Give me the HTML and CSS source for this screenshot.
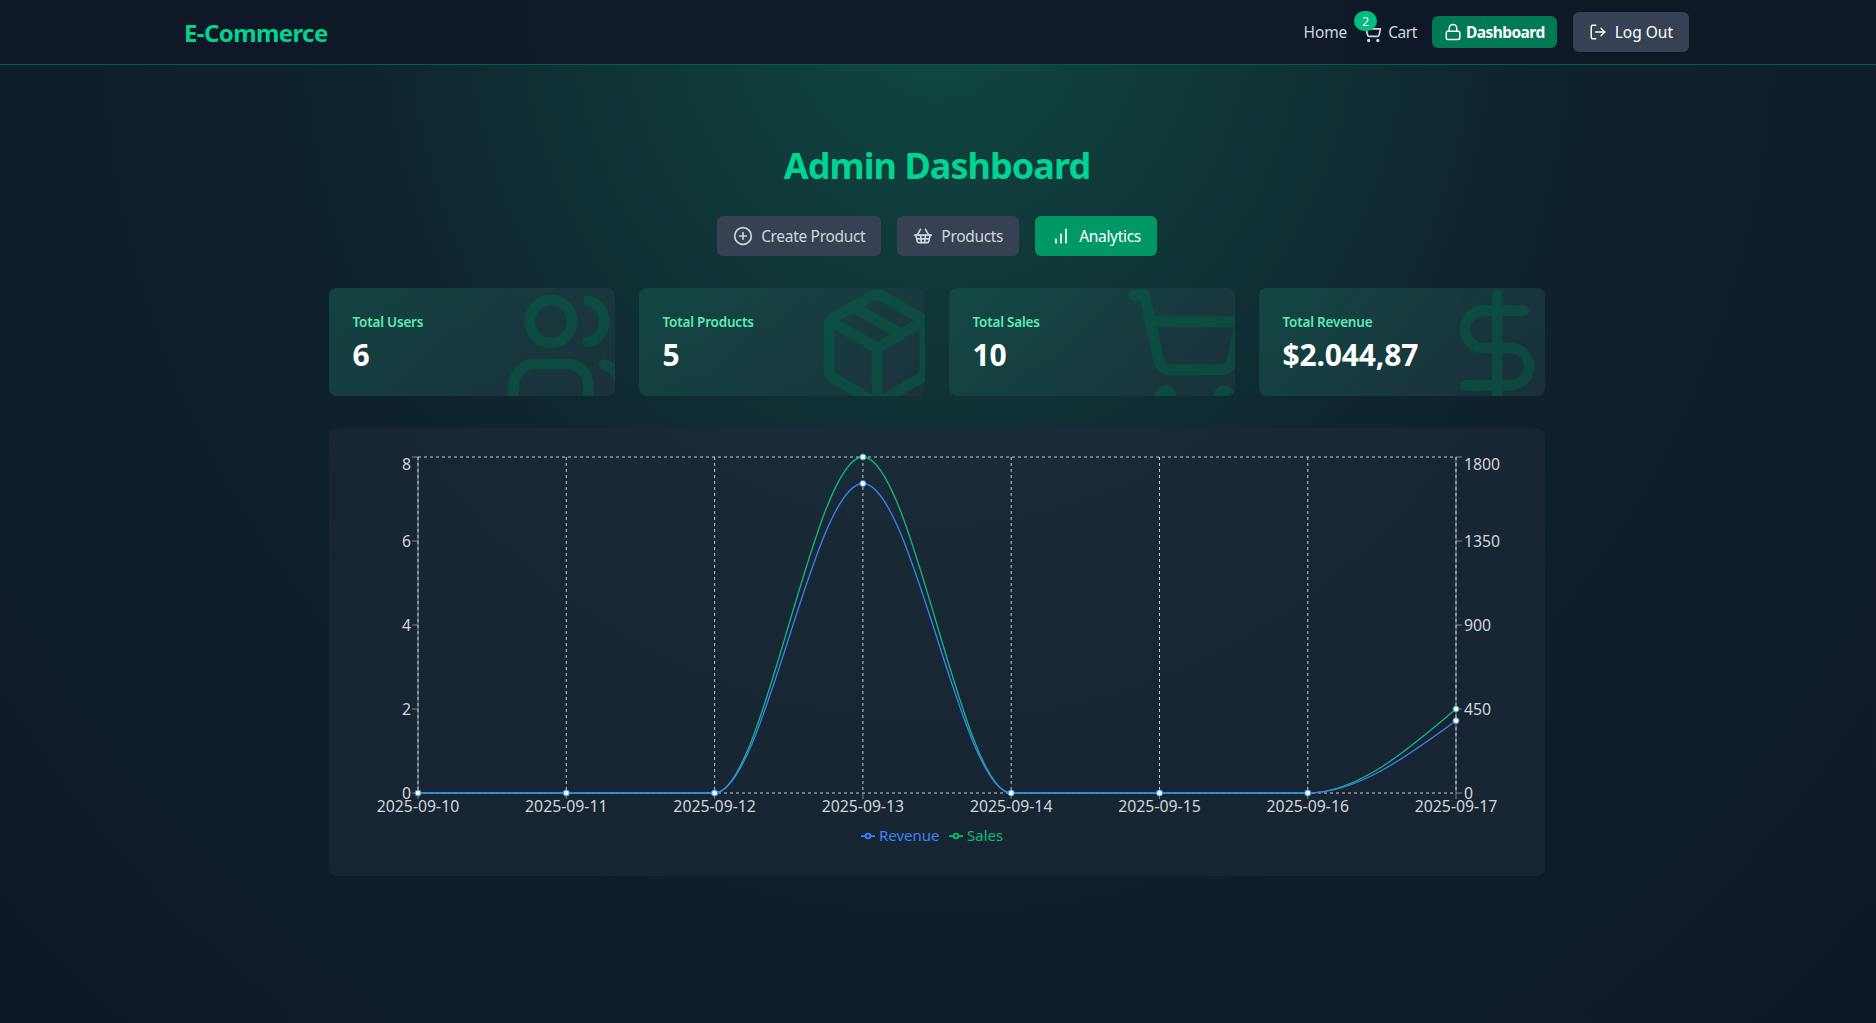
FILE: index.html
```html
<!DOCTYPE html>
<html lang="en">
<head>
<meta charset="utf-8">
<title>E-Commerce Admin Dashboard</title>
<link rel="stylesheet" href="styles.css">
</head>
<body>
<header class="header">
  <div class="header-inner">
    <a class="logo">E-Commerce</a>
    <nav class="nav">
      <a class="nav-link">Home</a>
      <a class="nav-link cart">
        <span class="badge">2</span>
        <svg class="icon i20 cart-icon" viewBox="0 0 24 24"><circle cx="8" cy="21" r="1"/><circle cx="19" cy="21" r="1"/><path d="M2.05 2.05h2l2.66 12.42a2 2 0 0 0 2 1.58h9.78a2 2 0 0 0 1.95-1.57l1.65-7.43H5.12"/></svg>
        <span class="cart-text">Cart</span>
      </a>
      <a class="btn-dash">
        <svg class="icon i18" viewBox="0 0 24 24"><rect x="3" y="11" width="18" height="11" rx="2"/><path d="M7 11V7a5 5 0 0 1 10 0v4"/></svg>
        <span>Dashboard</span>
      </a>
      <a class="btn-logout">
        <svg class="icon i18" viewBox="0 0 24 24"><path d="M9 21H5a2 2 0 0 1-2-2V5a2 2 0 0 1 2-2h4"/><path d="M16 17l5-5-5-5"/><path d="M21 12H9"/></svg>
        <span>Log Out</span>
      </a>
    </nav>
  </div>
</header>
<main class="main">
  <h1 class="title">Admin Dashboard</h1>
  <div class="tabs">
    <button class="tab">
      <svg class="icon i20" viewBox="0 0 24 24"><circle cx="12" cy="12" r="10"/><path d="M8 12h8"/><path d="M12 8v8"/></svg>
      Create Product
    </button>
    <button class="tab">
      <svg class="icon i20" viewBox="0 0 24 24"><path d="m15 11-1 9"/><path d="m19 11-4-7"/><path d="M2 11h20"/><path d="m3.5 11 1.6 7.4a2 2 0 0 0 2 1.6h9.8a2 2 0 0 0 2-1.6l1.7-7.4"/><path d="M4.5 15.5h15"/><path d="m5 11 4-7"/><path d="m9 11 1 9"/></svg>
      Products
    </button>
    <button class="tab tab-active">
      <svg class="icon i20" viewBox="0 0 24 24"><path d="M12 20V10"/><path d="M18 20V4"/><path d="M6 20v-4"/></svg>
      Analytics
    </button>
  </div>
  <section class="cards">
    <article class="card">
      <div class="card-text"><p class="card-label">Total Users</p><p class="card-value">6</p></div>
      <svg class="icon card-icon" viewBox="0 0 24 24"><path d="M16 21v-2a4 4 0 0 0-4-4H6a4 4 0 0 0-4 4v2"/><circle cx="9" cy="7" r="4"/><path d="M22 21v-2a4 4 0 0 0-3-3.87"/><path d="M16 3.13a4 4 0 0 1 0 7.75"/></svg>
    </article>
    <article class="card">
      <div class="card-text"><p class="card-label">Total Products</p><p class="card-value">5</p></div>
      <svg class="icon card-icon" viewBox="0 0 24 24"><path d="m7.5 4.27 9 5.15"/><path d="M21 8a2 2 0 0 0-1-1.73l-7-4a2 2 0 0 0-2 0l-7 4A2 2 0 0 0 3 8v8a2 2 0 0 0 1 1.73l7 4a2 2 0 0 0 2 0l7-4A2 2 0 0 0 21 16Z"/><path d="m3.3 7 8.7 5 8.7-5"/><path d="M12 22V12"/></svg>
    </article>
    <article class="card">
      <div class="card-text"><p class="card-label">Total Sales</p><p class="card-value">10</p></div>
      <svg class="icon card-icon" viewBox="0 0 24 24"><circle cx="8" cy="21" r="1"/><circle cx="19" cy="21" r="1"/><path d="M2.05 2.05h2l2.66 12.42a2 2 0 0 0 2 1.58h9.78a2 2 0 0 0 1.95-1.57l1.65-7.43H5.12"/></svg>
    </article>
    <article class="card">
      <div class="card-text"><p class="card-label">Total Revenue</p><p class="card-value">$2.044,87</p></div>
      <svg class="icon card-icon" viewBox="0 0 24 24"><path d="M12 2v20"/><path d="M17 5H9.5a3.5 3.5 0 0 0 0 7h5a3.5 3.5 0 0 1 0 7H6"/></svg>
    </article>
  </section>
  <section class="chart-panel">
    <svg class="chart" viewBox="353 452 1168 400" width="1168" height="400">
      <g class="grid">
        <path d="M418 457H1456M418 793H1456"/>
        <path d="M418 457V793M566.3 457V793M714.6 457V793M862.9 457V793M1011.2 457V793M1159.5 457V793M1307.8 457V793M1456 457V793"/>
      </g>
      <g class="axis">
        <path d="M418 457V793M412 457H418M412 541H418M412 625H418M412 709H418M412 793H418"/>
        <path d="M1456 457V793M1456 457H1462M1456 541H1462M1456 625H1462M1456 709H1462M1456 793H1462"/>
        <path d="M418 793V799M566.3 793V799M714.6 793V799M862.9 793V799M1011.2 793V799M1159.5 793V799M1307.8 793V799M1456 793V799"/>
      </g>
      <g class="tick-text tick-end">
        <text x="411" y="470">8</text><text x="411" y="547">6</text><text x="411" y="631">4</text><text x="411" y="715">2</text><text x="411" y="799">0</text>
      </g>
      <g class="tick-text tick-start">
        <text x="1464" y="470">1800</text><text x="1464" y="547">1350</text><text x="1464" y="631">900</text><text x="1464" y="715">450</text><text x="1464" y="799">0</text>
      </g>
      <g class="tick-text tick-mid">
        <text x="418" y="812">2025-09-10</text><text x="566.3" y="812">2025-09-11</text><text x="714.6" y="812">2025-09-12</text><text x="862.9" y="812">2025-09-13</text><text x="1011.2" y="812">2025-09-14</text><text x="1159.5" y="812">2025-09-15</text><text x="1307.8" y="812">2025-09-16</text><text x="1456" y="812">2025-09-17</text>
      </g>
      <path class="line line-sales" d="M418 793L714.6 793C763.9 793 813.6 457 862.9 457C912.2 457 961.9 793 1011.2 793L1307.8 793C1357.2 793 1406.6 751 1456 709"/>
      <g class="dots dots-sales">
        <circle cx="418" cy="793" r="3"/><circle cx="566.3" cy="793" r="3"/><circle cx="714.6" cy="793" r="3"/><circle cx="862.9" cy="457" r="3"/><circle cx="1011.2" cy="793" r="3"/><circle cx="1159.5" cy="793" r="3"/><circle cx="1307.8" cy="793" r="3"/><circle cx="1456" cy="709" r="3"/>
      </g>
      <path class="line line-revenue" d="M418 793L714.6 793C763.9 793 813.6 483.5 862.9 483.5C912.2 483.5 961.9 793 1011.2 793L1307.8 793C1357.2 793 1406.6 756.8 1456 720.7"/>
      <g class="dots dots-revenue">
        <circle cx="418" cy="793" r="3"/><circle cx="566.3" cy="793" r="3"/><circle cx="714.6" cy="793" r="3"/><circle cx="862.9" cy="483.5" r="3"/><circle cx="1011.2" cy="793" r="3"/><circle cx="1159.5" cy="793" r="3"/><circle cx="1307.8" cy="793" r="3"/><circle cx="1456" cy="720.7" r="3"/>
      </g>
      <g class="legend legend-revenue">
        <path d="M861 836h4.67M870.33 836H875"/><circle cx="868" cy="836" r="2.33"/>
        <text x="879" y="841">Revenue</text>
      </g>
      <g class="legend legend-sales">
        <path d="M949 836h4.67M958.33 836H963"/><circle cx="956" cy="836" r="2.33"/>
        <text x="967" y="841">Sales</text>
      </g>
    </svg>
  </section>
</main>
</body>
</html>
```
FILE: styles.css
```css
* { box-sizing: border-box; }
html, body { margin: 0; padding: 0; height: 100%; }
body {
  min-height: 1023px;
  overflow: hidden;
  background-color: #101828;
  background-image: radial-gradient(ellipse at top, rgba(16,185,129,.3) 0%, rgba(10,80,60,.2) 45%, rgba(0,20,20,.15) 100%);
  color: #fff;
  font-family: "Noto Sans", "Open Sans", sans-serif;
}
p, h1 { margin: 0; }
.icon { fill: none; stroke: currentColor; stroke-width: 2; stroke-linecap: round; stroke-linejoin: round; flex: none; display: block; }
.i20 { width: 20px; height: 20px; }
.i18 { width: 18px; height: 18px; }

.header { height: 65px; width: 100%; background: rgba(16,24,40,.96); border-bottom: 1px solid #006045; }
.header-inner { width: 1536px; margin-left: 169px; padding: 0 16px 0 15px; height: 64px; display: flex; align-items: center; justify-content: space-between; }
.logo { font-size: 24px; font-weight: 700; color: #00d492; letter-spacing: -.6px; }
.nav { display: flex; align-items: center; gap: 16px; }
.nav-link { font-size: 15.5px; color: #d1d5dc; display: flex; align-items: center; gap: 6px; position: relative; letter-spacing: -.1px; }
.cart { margin-left: -1px; margin-right: -1px; }
.cart-text { letter-spacing: -.45px; }
.cart-icon { margin-top: 2px; }
.badge { position: absolute; left: -8px; top: -10px; width: 23px; height: 20px; border-radius: 10px; background: #00bc7d; color: #fff; font-size: 12px; display: flex; align-items: center; justify-content: center; }
.btn-dash { height: 32px; padding: 0 12px; border-radius: 6px; background: #007a55; color: #fff; font-size: 15.5px; font-weight: 700; letter-spacing: -.55px; display: flex; align-items: center; gap: 4px; }
.btn-logout { height: 40px; padding: 0 16px; border-radius: 6px; background: #364153; color: #fff; font-size: 15.5px; display: flex; align-items: center; gap: 8px; }

.main { width: 1874px; padding-top: 81px; }
.title { font-size: 36px; line-height: 40px; font-weight: 700; color: #00d492; text-align: center; margin-bottom: 30px; letter-spacing: -.95px; }
.tabs { display: flex; justify-content: center; gap: 16px; margin-bottom: 32px; }
.tab { height: 40px; padding: 0 16px; border: 0; border-radius: 6px; background: #364153; color: #d1d5dc; font: inherit; font-size: 15.5px; letter-spacing: -.32px; display: flex; align-items: center; gap: 8px; }
.tab-active { background: #009966; color: #fff; }

.cards { width: 1216px; margin: 0 auto 32px; display: grid; grid-template-columns: repeat(4, 1fr); gap: 24px; }
.card { position: relative; height: 108px; padding: 24px 23.5px; overflow: hidden; border-radius: 8px; background: linear-gradient(135deg, rgba(0,153,102,.25), rgba(40,100,90,.15)), rgba(30,41,57,.7); }
.card-label { font-size: 13.5px; line-height: 20px; font-weight: 600; color: #5ee9b5; letter-spacing: -.2px; }
.card-value { font-size: 30px; line-height: 36px; font-weight: 700; color: #fff; letter-spacing: -.15px; margin-top: 5px; }
.card-icon { position: absolute; right: -16px; bottom: -16px; width: 128px; height: 128px; color: #006045; opacity: .5; }

.chart-panel { width: 1216px; height: 448px; margin: 0 auto; padding: 24px; border-radius: 8px; background: rgba(30,41,57,.6); }
.chart { display: block; }
.grid path { fill: none; stroke: #ccc; stroke-dasharray: 3 3; }
.axis path { fill: none; stroke: #d1d5db; stroke-opacity: .55; }
.tick-text text { font-size: 15.8px; fill: #d1d5db; }
.tick-end { text-anchor: end; }
.tick-start { text-anchor: start; }
.tick-mid { text-anchor: middle; }
.line { fill: none; stroke-width: 1.3; }
.line-sales { stroke: #10b981; }
.line-revenue { stroke: #3b82f6; }
.dots circle { fill: #fff; stroke-width: 1; }
.dots-sales circle { stroke: #10b981; }
.dots-revenue circle { stroke: #3b82f6; }
.legend text { font-size: 15px; }
.legend circle { fill: none; stroke-width: 1.75; }
.legend path { fill: none; stroke-width: 1.75; }
.legend-revenue { fill: #3b82f6; }
.legend-revenue path, .legend-revenue circle { stroke: #3b82f6; }
.legend-sales { fill: #10b981; }
.legend-sales path, .legend-sales circle { stroke: #10b981; }
```
